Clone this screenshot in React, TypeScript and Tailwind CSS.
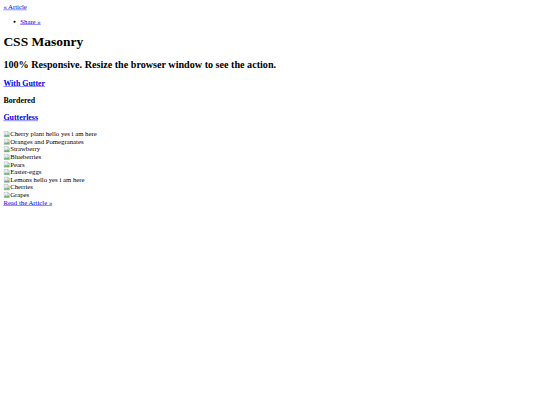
import React from 'react';

const photos = [
    'Cherry plant hello yes i am here',
    'Oranges and Pomegranates',
    'Strawberry',
    'Blueberries',
    'Pears',
    'Easter-eggs',
    'Lemons hello yes i am here',
    'Cherries',
    'Grapes',
];

const BrokenImage: React.FC = () => (
    <svg width="16" height="16" viewBox="0 0 16 16" className="inline-block align-[-3px]">
        <path d="M1.5 1.5h9l4 4v9h-13z" fill="#f2f2f2" stroke="#9a9a9a" />
        <path d="M10.5 1.5v4h4" fill="none" stroke="#9a9a9a" />
        <rect x="2" y="6" width="12" height="4" fill="#cfe3f3" />
        <path d="M2 14V11l3-2 3 2 3-3 3 3v3z" fill="#6fb36a" />
    </svg>
);

const Link: React.FC<{ children: React.ReactNode }> = ({ children }) => (
    <a href="#" className="text-[#0000ee] underline">{children}</a>
);

export default function App() {
    return (
        <div className="h-[405px] w-[540px] overflow-hidden bg-white">
            {/* page laid out at 1280px and shrunk to the 540px window */}
            <div className="w-[1280px] origin-top-left scale-[0.421875] p-2 text-[16px] leading-[normal] text-black font-['Liberation_Serif',serif]">
                <Link>« Article</Link>
                <ul className="my-4 pl-10 list-disc">
                    <li><Link>Share »</Link></li>
                </ul>
                <h1 className="text-[32px] font-bold my-[21.44px]">CSS Masonry</h1>
                <h2 className="text-[24px] font-bold my-[19.92px]">100% Responsive. Resize the browser window to see the action.</h2>
                <h3 className="text-[18.72px] font-bold my-[18.72px]"><Link>With Gutter</Link></h3>
                <h3 className="text-[18.72px] font-bold my-[18.72px]">Bordered</h3>
                <h3 className="text-[18.72px] font-bold my-[18.72px]"><Link>Gutterless</Link></h3>
                <div>
                    {photos.map(name => (
                        <div key={name}>
                            <BrokenImage />
                            <span>{name}</span>
                        </div>
                    ))}
                </div>
                <Link>Read the Article »</Link>
            </div>
        </div>
    );
}
